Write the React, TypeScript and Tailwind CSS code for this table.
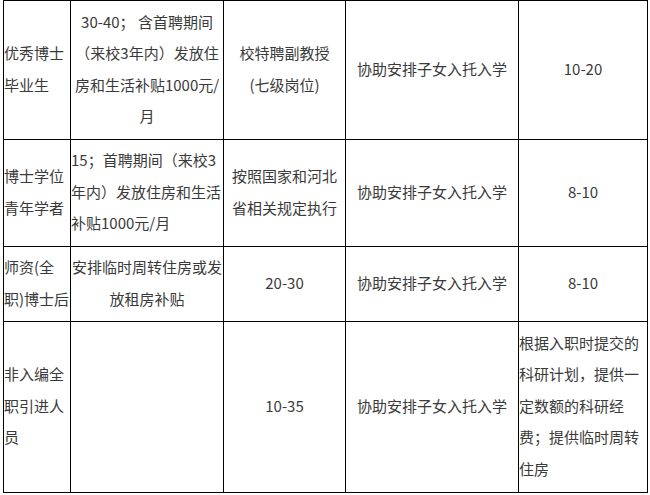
import React from "react";

const cell = "border border-black p-0 pb-[3px] align-middle whitespace-nowrap";

export default function App() {
  return (
    <div
      className="w-[650px] h-[495px] bg-white overflow-hidden text-[15px] leading-[31.5px] text-[#3a3a3a]"
      style={{ fontFamily: '"Noto Sans CJK SC", "Noto Sans", sans-serif' }}
    >
      <table className="ml-[3px] border-collapse table-fixed w-[644px]">
        <colgroup>
          <col className="w-[67px]" />
          <col className="w-[153px]" />
          <col className="w-[122px]" />
          <col className="w-[173px]" />
          <col className="w-[129px]" />
        </colgroup>
        <tbody>
          <tr className="h-[139px]">
            <td className={`${cell} text-left`}>
              优秀博士
              <br />
              毕业生
            </td>
            <td className={`${cell} text-center`}>
              30-40； 含首聘期间
              <br />
              （来校3年内）发放住
              <br />
              房和生活补贴1000元/
              <br />月
            </td>
            <td className={`${cell} text-center`}>
              校特聘副教授
              <br />
              (七级岗位)
            </td>
            <td className={`${cell} text-center`}>协助安排子女入托入学</td>
            <td className={`${cell} text-center`}>10-20</td>
          </tr>
          <tr className="h-[107px]">
            <td className={`${cell} text-left`}>
              博士学位
              <br />
              青年学者
            </td>
            <td className={`${cell} text-left`}>
              15；首聘期间（来校3
              <br />
              年内）发放住房和生活
              <br />
              补贴1000元/月
            </td>
            <td className={`${cell} text-center`}>
              按照国家和河北
              <br />
              省相关规定执行
            </td>
            <td className={`${cell} text-center`}>协助安排子女入托入学</td>
            <td className={`${cell} text-center`}>8-10</td>
          </tr>
          <tr className="h-[75px]">
            <td className={`${cell} text-left`}>
              师资(全
              <br />
              职)博士后
            </td>
            <td className={`${cell} text-center`}>
              安排临时周转住房或发
              <br />
              放租房补贴
            </td>
            <td className={`${cell} text-center`}>20-30</td>
            <td className={`${cell} text-center`}>协助安排子女入托入学</td>
            <td className={`${cell} text-center`}>8-10</td>
          </tr>
          <tr className="h-[171px]">
            <td className={`${cell} text-left`}>
              非入编全
              <br />
              职引进人
              <br />员
            </td>
            <td className={`${cell} text-center`}></td>
            <td className={`${cell} text-center`}>10-35</td>
            <td className={`${cell} text-center`}>协助安排子女入托入学</td>
            <td className={`${cell} text-left`}>
              根据入职时提交的
              <br />
              科研计划，提供一
              <br />
              定数额的科研经
              <br />
              费；提供临时周转
              <br />
              住房
            </td>
          </tr>
        </tbody>
      </table>
    </div>
  );
}
